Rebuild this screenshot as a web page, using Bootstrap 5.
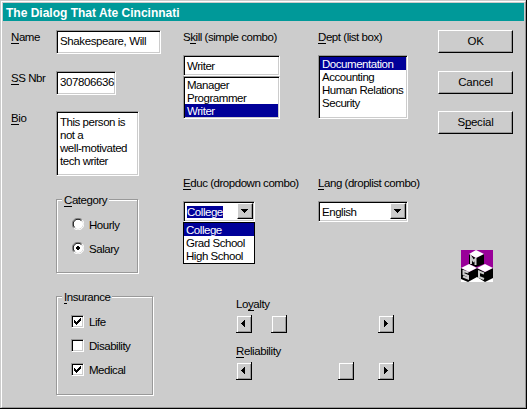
<!DOCTYPE html>
<html lang="en">
<head>
<meta charset="utf-8">
<title>The Dialog That Ate Cincinnati</title>
<link rel="stylesheet" href="https://cdn.jsdelivr.net/npm/bootstrap@5.3.0/dist/css/bootstrap.min.css">
<style>
  body { margin: 0; background: #ccc; overflow: hidden; }
  .dialog { width: 527px; height: 409px; background: #ccc; color: #000; padding: 1px 0 0 1px;
    border-right: 1px solid #000; border-bottom: 1px solid #000;
    font: 11.5px/13px "Liberation Sans", sans-serif; letter-spacing: -.46px; white-space: nowrap; }
  .dialog-inner { height: 407px; border: 1px solid #fff; border-right-color: #999; border-bottom-color: #999; padding: 1px 1px 0 1px; }
  .titlebar { height: 18px; background: #009999; color: #fff; font: bold 12px/20px "Liberation Sans", sans-serif; letter-spacing: 0; padding-left: 3px; }
  .pane { padding-left: 8px; }
  u { text-decoration: none; border-bottom: 1px solid #000; display: inline-block; height: 13px; line-height: 13px; vertical-align: top; letter-spacing: 0; margin-right: -.4px; }
  .col-left { width: 172px; padding-top: 9px; }
  .col-mid { width: 255px; padding-top: 10px; }
  .col-right { width: 75px; padding-top: 9px; }
  .lbl { width: 45px; height: 15px; padding-top: 1px; }
  .sunk { background: #fff; border: 1px solid; border-color: #999 #fff #fff #999; box-shadow: inset 1px 1px #000, inset -1px -1px #ccc; padding: 4px 3px 0; }
  .name { width: 105px; height: 24px; margin-bottom: 17px; letter-spacing: -.38px; }
  .ssn { width: 60px; height: 24px; margin-bottom: 16px; letter-spacing: -.4px; }
  .bio { width: 83px; height: 65px; margin-bottom: 23px; }
  .grp { margin-left: 45px; border: 1px solid #999; box-shadow: 1px 1px #fff, inset 1px 1px #fff; padding-left: 15px; }
  .grp-title { display: table; margin: -6px 0 0 -10px; padding: 0 2px; background: #ccc; height: 13px; }
  .cat { width: 82px; height: 74px; margin-bottom: 23px; }
  .ins { width: 97px; height: 99px; padding-left: 14px; }
  .ins .grp-title { margin-left: -9px; }
  .opt { height: 13px; margin-top: 11px; line-height: 15px; }
  .opt svg { margin-right: 5px; }
  .box { width: 13px; height: 13px; margin-right: 5px; background: #fff; border: 1px solid; border-color: #999 #fff #fff #999; box-shadow: inset 1px 1px #000, inset -1px -1px #ccc; }
  .box svg { display: block; margin: 2px; }
  .head { margin-bottom: 11px; }
  .skill { width: 97px; margin-right: 38px; }
  .combo { height: 21px; padding: 2px 2px 2px 3px; }
  .combo-text { line-height: 16px; height: 17px; }
  .listing { padding: 1px 1px 2px 1px; }
  .short-list { height: 43px; }
  .tall-list { height: 64px; }
  .listing > div, .drop > div { height: 13px; padding-left: 2px; line-height: 15px; }
  .sel { background: #000099; color: #fff; }
  .dept { width: 90px; }
  .lower { margin-top: 58px; }
  .educ { width: 72px; }
  .drop { width: 72px; border: 1px solid #000; background: #fff; height: 42px; }
  .raised { background: #ccc; border: 1px solid; border-color: #fff #000 #000 #fff; box-shadow: inset -1px -1px #999; }
  .arrow { width: 16px; height: 16px; margin: -1px -1px 0 0; }
  .push { width: 75px; height: 23px; margin-bottom: 18px; line-height: 20px; text-align: center; letter-spacing: -.2px; }
  .push + .push { margin-bottom: 17px; }
  .push u { height: 17px; line-height: 20px; }
  .logo { margin: 116px 0 0 23px; display: block; }
  .track { width: 158px; height: 18px; margin-top: 4px; }
  .knob { width: 16px; height: 18px; padding: 1px 0 0 1px; background: linear-gradient(#ccc, #ccc) 0 0 / 1px 17px no-repeat, linear-gradient(#ccc, #ccc) 0 0 / 15px 1px no-repeat, #000; }
  .knob > div { width: 14px; height: 16px; background: #ccc; box-shadow: inset 1px 1px #fff, inset -1px -1px #999; }
  .sliders { margin: 34px 0 0 53px; letter-spacing: -.4px; }
  .loyal { margin-left: 19px; }
  .reliable { margin-left: 86px; }
  .second { margin-top: 12px; }
</style>
<script src="https://cdn.jsdelivr.net/npm/bootstrap@5.3.0/dist/js/bootstrap.bundle.min.js"></script>
</head>
<body>
<div class="dialog"><div class="dialog-inner">
  <div class="titlebar">The Dialog That Ate Cincinnati</div>
  <div class="pane d-flex">
    <div class="col-left">
      <div class="d-flex"><div class="lbl"><u>N</u>ame</div><div class="sunk name">Shakespeare, Will</div></div>
      <div class="d-flex"><div class="lbl"><u>S</u>S Nbr</div><div class="sunk ssn">307806636</div></div>
      <div class="d-flex"><div class="lbl"><u>B</u>io</div><div class="sunk bio">This person is<br>not a<br>well-motivated<br>tech writer</div></div>
      <div class="grp cat">
        <div class="grp-title"><u>C</u>ategory</div>
        <div class="opt d-flex"><svg width="12" height="12" viewBox="0 0 12 12"><circle cx="6" cy="6" r="5" fill="#fff"/><path d="M1.8 10.2A5.5 5.5 0 0 1 10.2 1.8" fill="none" stroke="#888"/><path d="M2.6 9.4A4.6 4.6 0 0 1 9.4 2.6" fill="none" stroke="#000"/><path d="M10.2 1.8A5.5 5.5 0 0 1 1.8 10.2" fill="none" stroke="#fff"/></svg>Hourly</div>
        <div class="opt d-flex"><svg width="12" height="12" viewBox="0 0 12 12"><circle cx="6" cy="6" r="5" fill="#fff"/><path d="M1.8 10.2A5.5 5.5 0 0 1 10.2 1.8" fill="none" stroke="#888"/><path d="M2.6 9.4A4.6 4.6 0 0 1 9.4 2.6" fill="none" stroke="#000"/><path d="M10.2 1.8A5.5 5.5 0 0 1 1.8 10.2" fill="none" stroke="#fff"/><path d="M5 4h2v1h1v2h-1v1h-2v-1h-1v-2h1z" fill="#000"/></svg>Salary</div>
      </div>
      <div class="grp ins">
        <div class="grp-title"><u>I</u>nsurance</div>
        <div class="opt d-flex"><div class="box"><svg width="7" height="7" shape-rendering="crispEdges"><path d="M0 2h1v1h1v1h1v-1h1v-1h1v-1h1v-1h1v3h-1v1h-1v1h-1v1h-1v1h-1v-1h-1v-1h-1z"/></svg></div>Life</div>
        <div class="opt d-flex"><div class="box"></div>Disability</div>
        <div class="opt d-flex"><div class="box"><svg width="7" height="7" shape-rendering="crispEdges"><path d="M0 2h1v1h1v1h1v-1h1v-1h1v-1h1v-1h1v3h-1v1h-1v1h-1v1h-1v1h-1v-1h-1v-1h-1z"/></svg></div>Medical</div>
      </div>
    </div>
    <div class="col-mid">
      <div class="d-flex">
        <div class="skill">
          <div class="head">S<u>k</u>ill (simple combo)</div>
          <div class="sunk combo"><div class="combo-text">Writer</div></div>
          <div class="sunk listing short-list"><div>Manager</div><div>Programmer</div><div class="sel">Writer</div></div>
        </div>
        <div class="dept">
          <div class="head"><u>D</u>ept (list box)</div>
          <div class="sunk listing tall-list"><div class="sel">Documentation</div><div>Accounting</div><div>Human Relations</div><div>Security</div></div>
        </div>
      </div>
      <div class="d-flex lower">
        <div class="skill">
          <div class="head"><u>E</u>duc (dropdown combo)</div>
          <div class="sunk combo educ d-flex justify-content-between"><div class="combo-text"><span class="sel">College</span></div><div class="raised arrow"><svg class="d-block" width="14" height="14" shape-rendering="crispEdges"><path d="M3 5h7v1h-1v1h-1v1h-1v1h-1v-1h-1v-1h-1v-1h-1z"/></svg></div></div>
          <div class="drop"><div class="sel">College</div><div>Grad School</div><div>High School</div></div>
        </div>
        <div class="dept">
          <div class="head"><u>L</u>ang (droplist combo)</div>
          <div class="sunk combo d-flex justify-content-between"><div class="combo-text">English</div><div class="raised arrow"><svg class="d-block" width="14" height="14" shape-rendering="crispEdges"><path d="M3 5h7v1h-1v1h-1v1h-1v1h-1v-1h-1v-1h-1v-1h-1z"/></svg></div></div>
        </div>
      </div>
      <div class="sliders">
        <div>Lo<u>y</u>alty</div>
        <div class="track d-flex"><div class="knob"><div><svg class="d-block" width="14" height="16" shape-rendering="crispEdges"><path d="M8 4v7h-1v-1h-1v-1h-1v-1h-1v-1h1v-1h1v-1h1v-1z"/></svg></div></div><div class="knob loyal"><div></div></div><div class="knob ms-auto"><div><svg class="d-block" width="14" height="16" shape-rendering="crispEdges"><path d="M5 4v7h1v-1h1v-1h1v-1h1v-1h-1v-1h-1v-1h-1v-1z"/></svg></div></div></div>
        <div class="second"><u>R</u>eliability</div>
        <div class="track d-flex"><div class="knob"><div><svg class="d-block" width="14" height="16" shape-rendering="crispEdges"><path d="M8 4v7h-1v-1h-1v-1h-1v-1h-1v-1h1v-1h1v-1h1v-1z"/></svg></div></div><div class="knob reliable"><div></div></div><div class="knob ms-auto"><div><svg class="d-block" width="14" height="16" shape-rendering="crispEdges"><path d="M5 4v7h1v-1h1v-1h1v-1h1v-1h-1v-1h-1v-1h-1v-1z"/></svg></div></div></div>
      </div>
    </div>
    <div class="col-right">
      <div class="raised push">OK</div>
      <div class="raised push">Cancel</div>
      <div class="raised push">S<u>p</u>ecial</div>
      <svg class="logo" width="32" height="32" viewBox="0 0 32 32">
        <path fill="#909" d="M0 0h32v32H0z"/>
        <path fill="#fff" d="M0 27h32v5H0z"/>
        <path d="M8 4v10l7 3 8-3V4l-8 4zM0 18v11l7 3 9-5 8 5 8-4V18l-8 4-8-4-8 4z"/>
        <path fill="#fff" d="M8 4l7-4 8 4-8 4zM0 18l8-4 8 4-8 4zM16 18l8-4 8 4-8 4z"/>
        <path fill="none" stroke="#ccc" stroke-width="2" d="M10 14V7l2.500 4 2-2v6M7.500 22.500l-5-1.500v3l4.500 2v2.500l-5-2M23 23.500l-5-2v5.500l5 2"/>
      </svg>
    </div>
  </div>
</div></div>
</body>
</html>
